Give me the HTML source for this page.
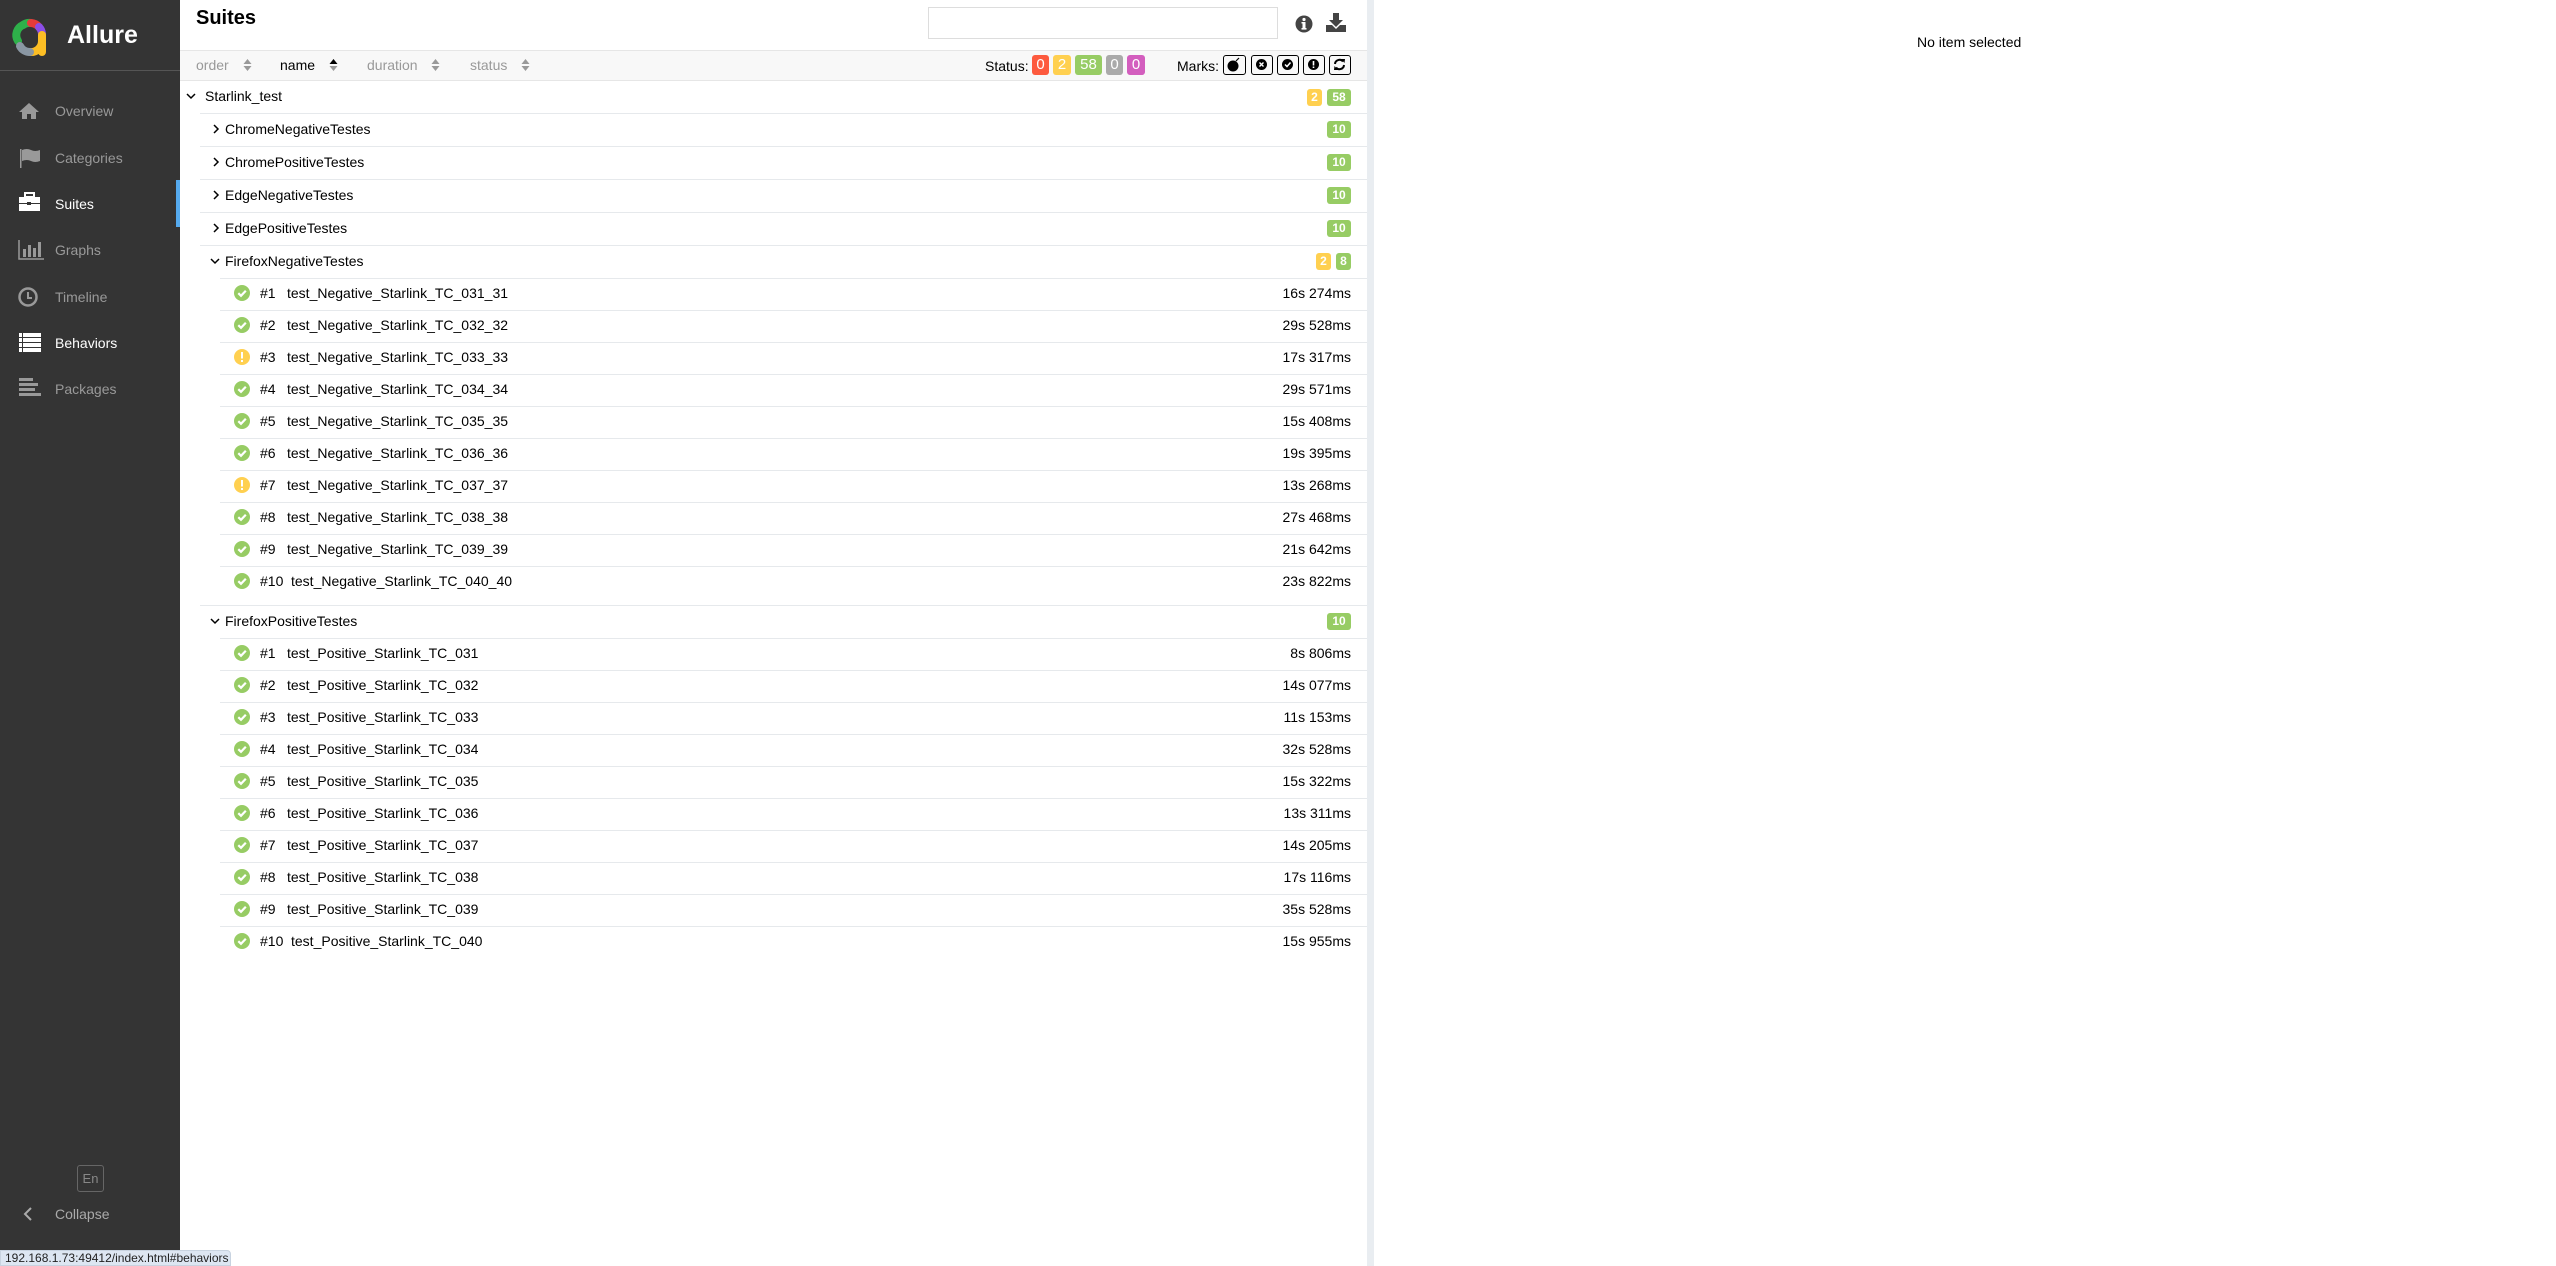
<!DOCTYPE html>
<html><head><meta charset="utf-8"><style>
*{margin:0;padding:0;box-sizing:border-box}
body{width:2556px;height:1266px;position:relative;background:#fff;font-family:"Liberation Sans",Arial,sans-serif;font-size:14px;color:#000;overflow:hidden}
.a{position:absolute}
#side{left:0;top:0;width:180px;height:1266px;background:#343434}
.nav{position:absolute;left:55px;font-size:14px;color:#999;line-height:16px}
.nav.on{color:#fff}
.ic{position:absolute;left:18px}
.line{position:absolute;height:1px;background:#e6e9ec}
.t{position:absolute;line-height:16px}
.badge{position:absolute;height:17px;border-radius:3px;color:#fff;font-weight:bold;font-size:12px;line-height:17px;text-align:center}
.sb{position:absolute;top:55px;height:20px;border-radius:3px;color:#fff;font-size:15px;line-height:20px;text-align:center}
.mk{position:absolute;top:55px;width:22px;height:20px;border:1.5px solid #000;border-radius:3px}
.arr{position:absolute;top:58px}
</style></head><body>
<div id="side" class="a">
<svg class="a" style="left:6px;top:17px" width="46" height="42" viewBox="0 0 46 42">
<g fill="none" stroke-width="8" stroke-linecap="round">
<path d="M12 24 A11 11 0 0 1 17 8" stroke="#2eb04a"/>
<path d="M17 8 A11 11 0 0 1 25 6" stroke="#2eb04a"/>
<path d="M25 6 A11 11 0 0 1 33 10" stroke="#e53b3b"/>
<path d="M33 10 A11 11 0 0 1 36 17" stroke="#8b4ee8"/>
<path d="M36 18 L36 35" stroke="#fcbe24"/>
<path d="M36 24 A11 11 0 0 1 24 35" stroke="#fcbe24"/>
<path d="M24 35 A11 11 0 0 1 14 29" stroke="#8a97a3"/>
</g></svg>
<div class="a" style="left:67px;top:20px;font-size:25px;font-weight:bold;color:#fff;line-height:30px">Allure</div>
<div class="a" style="left:0;top:70px;width:180px;height:1px;background:#555"></div>
<svg class="ic" style="top:102px" width="22" height="18" viewBox="0 0 22 18"><path d="M11 1 L1 10 L4 10 L4 17 L9 17 L9 12 L13 12 L13 17 L18 17 L18 10 L21 10 Z" fill="#999"/></svg>
<div class="nav" style="top:103px">Overview</div>
<svg class="ic" style="top:148px" width="24" height="20" viewBox="0 0 24 20"><rect x="2" y="1" width="1.5" height="19" fill="#999"/><path d="M4 2 Q9 0 13 2 Q17 4 22 2 L22 13 Q17 15 13 13 Q9 11 4 13Z" fill="#999"/></svg>
<div class="nav" style="top:150px">Categories</div>
<svg class="ic" style="top:192px" width="23" height="20" viewBox="0 0 23 20"><rect x="7" y="1" width="9" height="4" fill="none" stroke="#fff" stroke-width="2"/><rect x="1" y="5" width="21" height="14" fill="#fff"/><rect x="1" y="11" width="21" height="1" fill="#343434"/><rect x="9" y="10" width="4" height="3" fill="#343434"/></svg>
<div class="nav on" style="top:196px">Suites</div>
<div class="a" style="left:176px;top:180px;width:4px;height:47px;background:#55aaee"></div>
<svg class="ic" style="top:240px" width="26" height="20" viewBox="0 0 26 20"><path d="M1 0 V19 H26" stroke="#999" stroke-width="1.5" fill="none"/><rect x="5" y="9" width="3" height="8" fill="#999"/><rect x="10" y="5" width="3" height="12" fill="#999"/><rect x="15" y="8" width="3" height="9" fill="#999"/><rect x="20" y="2" width="3" height="15" fill="#999"/></svg>
<div class="nav" style="top:242px">Graphs</div>
<svg class="ic" style="top:286px" width="22" height="22" viewBox="0 0 22 22"><circle cx="10" cy="11" r="8.5" fill="none" stroke="#999" stroke-width="2.5"/><path d="M10 6 V12 H14" stroke="#999" stroke-width="2" fill="none"/></svg>
<div class="nav" style="top:289px">Timeline</div>
<svg class="ic" style="top:333px" width="24" height="20" viewBox="0 0 24 20"><rect x="1" y="0" width="22" height="4" fill="#fff"/><rect x="1" y="5" width="22" height="4" fill="#fff"/><rect x="1" y="10" width="22" height="4" fill="#fff"/><rect x="1" y="15" width="22" height="4" fill="#fff"/><rect x="4" y="0" width="1" height="19" fill="#343434"/></svg>
<div class="nav on" style="top:335px">Behaviors</div>
<svg class="ic" style="top:378px" width="24" height="20" viewBox="0 0 24 20"><rect x="1" y="0" width="14" height="3" fill="#999"/><rect x="1" y="5" width="19" height="3" fill="#999"/><rect x="1" y="10" width="16" height="3" fill="#999"/><rect x="1" y="15" width="22" height="3" fill="#999"/></svg>
<div class="nav" style="top:381px">Packages</div>
<div class="a" style="left:77px;top:1165px;width:27px;height:27px;border:1px solid #666;border-radius:3px;color:#888;font-size:13px;line-height:25px;text-align:center">En</div>
<svg class="a" style="left:23px;top:1207px" width="10" height="14" viewBox="0 0 10 14"><path d="M8 1 L2 7 L8 13" stroke="#aaa" stroke-width="2" fill="none"/></svg>
<div class="nav" style="top:1222px;color:#aaa;top:1206px">Collapse</div>
</div>
<div class="a" style="left:0;top:1250px;width:231px;height:16px;background:#dde6f2;border:1px solid #c8d3e0;border-radius:0 4px 0 0;font-size:12px;color:#222;line-height:15px;padding-left:4px">192.168.1.73:49412/index.html#behaviors</div>

<div class="a" style="left:1367px;top:0;width:7px;height:1266px;background:#e9edf1"></div>
<div class="a" style="left:1917px;top:34px;font-size:14px">No item selected</div>

<div class="a" style="left:196px;top:6px;font-size:20px;font-weight:bold;line-height:24px">Suites</div>
<div class="a" style="left:928px;top:7px;width:350px;height:32px;border:1px solid #ddd"></div>
<svg class="a" style="left:1295px;top:15px" width="18" height="18" viewBox="0 0 18 18"><circle cx="9" cy="9" r="8.5" fill="#444"/><rect x="7.5" y="7" width="3" height="7" fill="#fff"/><rect x="6.5" y="13" width="5" height="1.6" fill="#fff"/><rect x="6.5" y="7" width="2" height="1.5" fill="#fff"/><circle cx="9" cy="4.5" r="1.6" fill="#fff"/></svg>
<svg class="a" style="left:1326px;top:13px" width="20" height="19" viewBox="0 0 20 19"><rect x="7" y="0" width="6" height="7" fill="#444"/><path d="M3 7 H17 L10 14Z" fill="#444"/><path d="M0 12 H6 L10 16 L14 12 H20 V19 H0Z" fill="#444"/></svg>

<div class="a" style="left:180px;top:50px;width:1187px;height:31px;background:#f8f8f8;border-top:1px solid #e6e6e6;border-bottom:1px solid #e6e6e6"></div>
<div class="t" style="left:196px;top:57px;color:#999">order</div>
<div class="t" style="left:280px;top:57px">name</div>
<div class="t" style="left:367px;top:57px;color:#999">duration</div>
<div class="t" style="left:470px;top:57px;color:#999">status</div>
<svg class="arr" style="left:243px" width="9" height="14" viewBox="0 0 9 14"><path d="M0.5 6 L4.5 1 L8.5 6Z M0.5 8 L4.5 13 L8.5 8Z" fill="#999"/></svg>
<svg class="arr" style="left:329px" width="9" height="14" viewBox="0 0 9 14"><path d="M0.5 6 L4.5 1 L8.5 6Z" fill="#000"/><path d="M0.5 8 L4.5 13 L8.5 8Z" fill="#999"/></svg>
<svg class="arr" style="left:431px" width="9" height="14" viewBox="0 0 9 14"><path d="M0.5 6 L4.5 1 L8.5 6Z M0.5 8 L4.5 13 L8.5 8Z" fill="#999"/></svg>
<svg class="arr" style="left:521px" width="9" height="14" viewBox="0 0 9 14"><path d="M0.5 6 L4.5 1 L8.5 6Z M0.5 8 L4.5 13 L8.5 8Z" fill="#999"/></svg>

<div class="t" style="left:985px;top:58px;font-size:14px">Status:</div>
<div class="sb" style="left:1032px;width:17px;background:#fd5a3e">0</div>
<div class="sb" style="left:1053px;width:18px;background:#ffd050">2</div>
<div class="sb" style="left:1075px;width:27px;background:#97cc64">58</div>
<div class="sb" style="left:1106px;width:17px;background:#aaa">0</div>
<div class="sb" style="left:1127px;width:18px;background:#d35ebe">0</div>
<div class="t" style="left:1177px;top:58px;font-size:14px">Marks:</div>
<div class="mk" style="left:1223px;width:23px"><svg width="20" height="17" viewBox="0 0 20 17"><circle cx="9" cy="10" r="5.5"/><path d="M12 5 L15 2" stroke="#000" stroke-width="1.2"/></svg></div>
<div class="mk" style="left:1251px"><svg width="19" height="17" viewBox="0 0 19 17"><circle cx="9.5" cy="8.5" r="5.5"/><path d="M7.5 6.5 L11.5 10.5 M11.5 6.5 L7.5 10.5" stroke="#fff" stroke-width="1.4"/></svg></div>
<div class="mk" style="left:1277px"><svg width="19" height="17" viewBox="0 0 19 17"><circle cx="9.5" cy="8.5" r="5.5"/><path d="M7 8.5 L9 10.5 L12.5 6.5" stroke="#fff" stroke-width="1.5" fill="none"/></svg></div>
<div class="mk" style="left:1303px"><svg width="19" height="17" viewBox="0 0 19 17"><circle cx="9.5" cy="8.5" r="5.5"/><rect x="8.7" y="5" width="1.6" height="4.5" fill="#fff"/><rect x="8.7" y="10.5" width="1.6" height="1.5" fill="#fff"/></svg></div>
<div class="mk" style="left:1329px"><svg width="19" height="17" viewBox="0 0 19 17"><path d="M5 8 A4.5 4.5 0 0 1 13 5.5 M14 9 A4.5 4.5 0 0 1 6 11.5" stroke="#000" stroke-width="2" fill="none"/><path d="M11 3 L15 3 L14.5 7Z M8 14 L4 14 L4.5 10Z"/></svg></div>

<div id="tree"></div>
<script>
const tree=document.getElementById('tree');
let h='';
const chevD='<svg class="a" style="left:LEFTpx;top:TOPpx" width="10" height="10" viewBox="0 0 10 10"><path d="M1 3 L5 7 L9 3" stroke="#000" stroke-width="1.5" fill="none"/></svg>';
const chevR='<svg class="a" style="left:LEFTpx;top:TOPpx" width="10" height="10" viewBox="0 0 10 10"><path d="M3 1 L7 5 L3 9" stroke="#000" stroke-width="1.5" fill="none"/></svg>';
function badges(y,list){let r=1351;for(let i=list.length-1;i>=0;i--){const[w,c,t]=list[i];h+=`<div class="badge" style="left:${r-w}px;top:${y-8}px;width:${w}px;background:${c}">${t}</div>`;r-=w+5;}}
const G='#97cc64',Y='#ffd050';
h+=chevD.replace('LEFT',186).replace('TOP',91);
h+=`<div class="t" style="left:205px;top:88px">Starlink_test</div>`;
badges(97,[[15,Y,'2'],[24,G,'58']]);
h+=`<div class="line" style="left:200px;width:1167px;top:113px"></div>`;
const suites=['ChromeNegativeTestes','ChromePositiveTestes','EdgeNegativeTestes','EdgePositiveTestes'];
let y=113;
suites.forEach(s=>{const c=y+16;h+=chevR.replace('LEFT',211).replace('TOP',c-5);h+=`<div class="t" style="left:225px;top:${c-8}px">${s}</div>`;badges(c,[[24,G,'10']]);y+=33;h+=`<div class="line" style="left:200px;width:1167px;top:${y}px"></div>`;});
function group(name,top,tests,b){
 const c=top+16;h+=chevD.replace('LEFT',210).replace('TOP',c-5);h+=`<div class="t" style="left:225px;top:${c-8}px">${name}</div>`;badges(c,b);
 let yy=top+33;h+=`<div class="line" style="left:220px;width:1147px;top:${yy}px"></div>`;
 tests.forEach((t,i)=>{const cc=yy+15;const warn=t[2];
  h+= warn?`<svg class="a" style="left:234px;top:${cc-8}px" width="16" height="16" viewBox="0 0 16 16"><circle cx="8" cy="8" r="8" fill="#ffd050"/><rect x="7" y="3" width="2" height="6.5" fill="#fff"/><rect x="7" y="11" width="2" height="2" fill="#fff"/></svg>`
  :`<svg class="a" style="left:234px;top:${cc-8}px" width="16" height="16" viewBox="0 0 16 16"><circle cx="8" cy="8" r="8" fill="#97cc64"/><path d="M4.3 8.2 L7 10.8 L11.8 5.8" stroke="#fff" stroke-width="2.2" fill="none"/></svg>`;
  const n='#'+(i+1);h+=`<div class="t" style="left:260px;top:${cc-8}px">${n}</div><div class="t" style="left:${i==9?291:287}px;top:${cc-8}px">${t[0]}</div><div class="t" style="right:${2556-1351}px;top:${cc-8}px">${t[1]}</div>`;
  yy+=32;if(i<9)h+=`<div class="line" style="left:220px;width:1147px;top:${yy}px"></div>`;});
 return yy;}
const neg=[['test_Negative_Starlink_TC_031_31','16s 274ms'],['test_Negative_Starlink_TC_032_32','29s 528ms'],['test_Negative_Starlink_TC_033_33','17s 317ms',1],['test_Negative_Starlink_TC_034_34','29s 571ms'],['test_Negative_Starlink_TC_035_35','15s 408ms'],['test_Negative_Starlink_TC_036_36','19s 395ms'],['test_Negative_Starlink_TC_037_37','13s 268ms',1],['test_Negative_Starlink_TC_038_38','27s 468ms'],['test_Negative_Starlink_TC_039_39','21s 642ms'],['test_Negative_Starlink_TC_040_40','23s 822ms']];
const pos=[['test_Positive_Starlink_TC_031','8s 806ms'],['test_Positive_Starlink_TC_032','14s 077ms'],['test_Positive_Starlink_TC_033','11s 153ms'],['test_Positive_Starlink_TC_034','32s 528ms'],['test_Positive_Starlink_TC_035','15s 322ms'],['test_Positive_Starlink_TC_036','13s 311ms'],['test_Positive_Starlink_TC_037','14s 205ms'],['test_Positive_Starlink_TC_038','17s 116ms'],['test_Positive_Starlink_TC_039','35s 528ms'],['test_Positive_Starlink_TC_040','15s 955ms']];
group('FirefoxNegativeTestes',y,neg,[[15,Y,'2'],[15,G,'8']]);
h+=`<div class="line" style="left:200px;width:1167px;top:605px"></div>`;
group('FirefoxPositiveTestes',605,pos,[[24,G,'10']]);
tree.innerHTML=h;
</script>
</body></html>
